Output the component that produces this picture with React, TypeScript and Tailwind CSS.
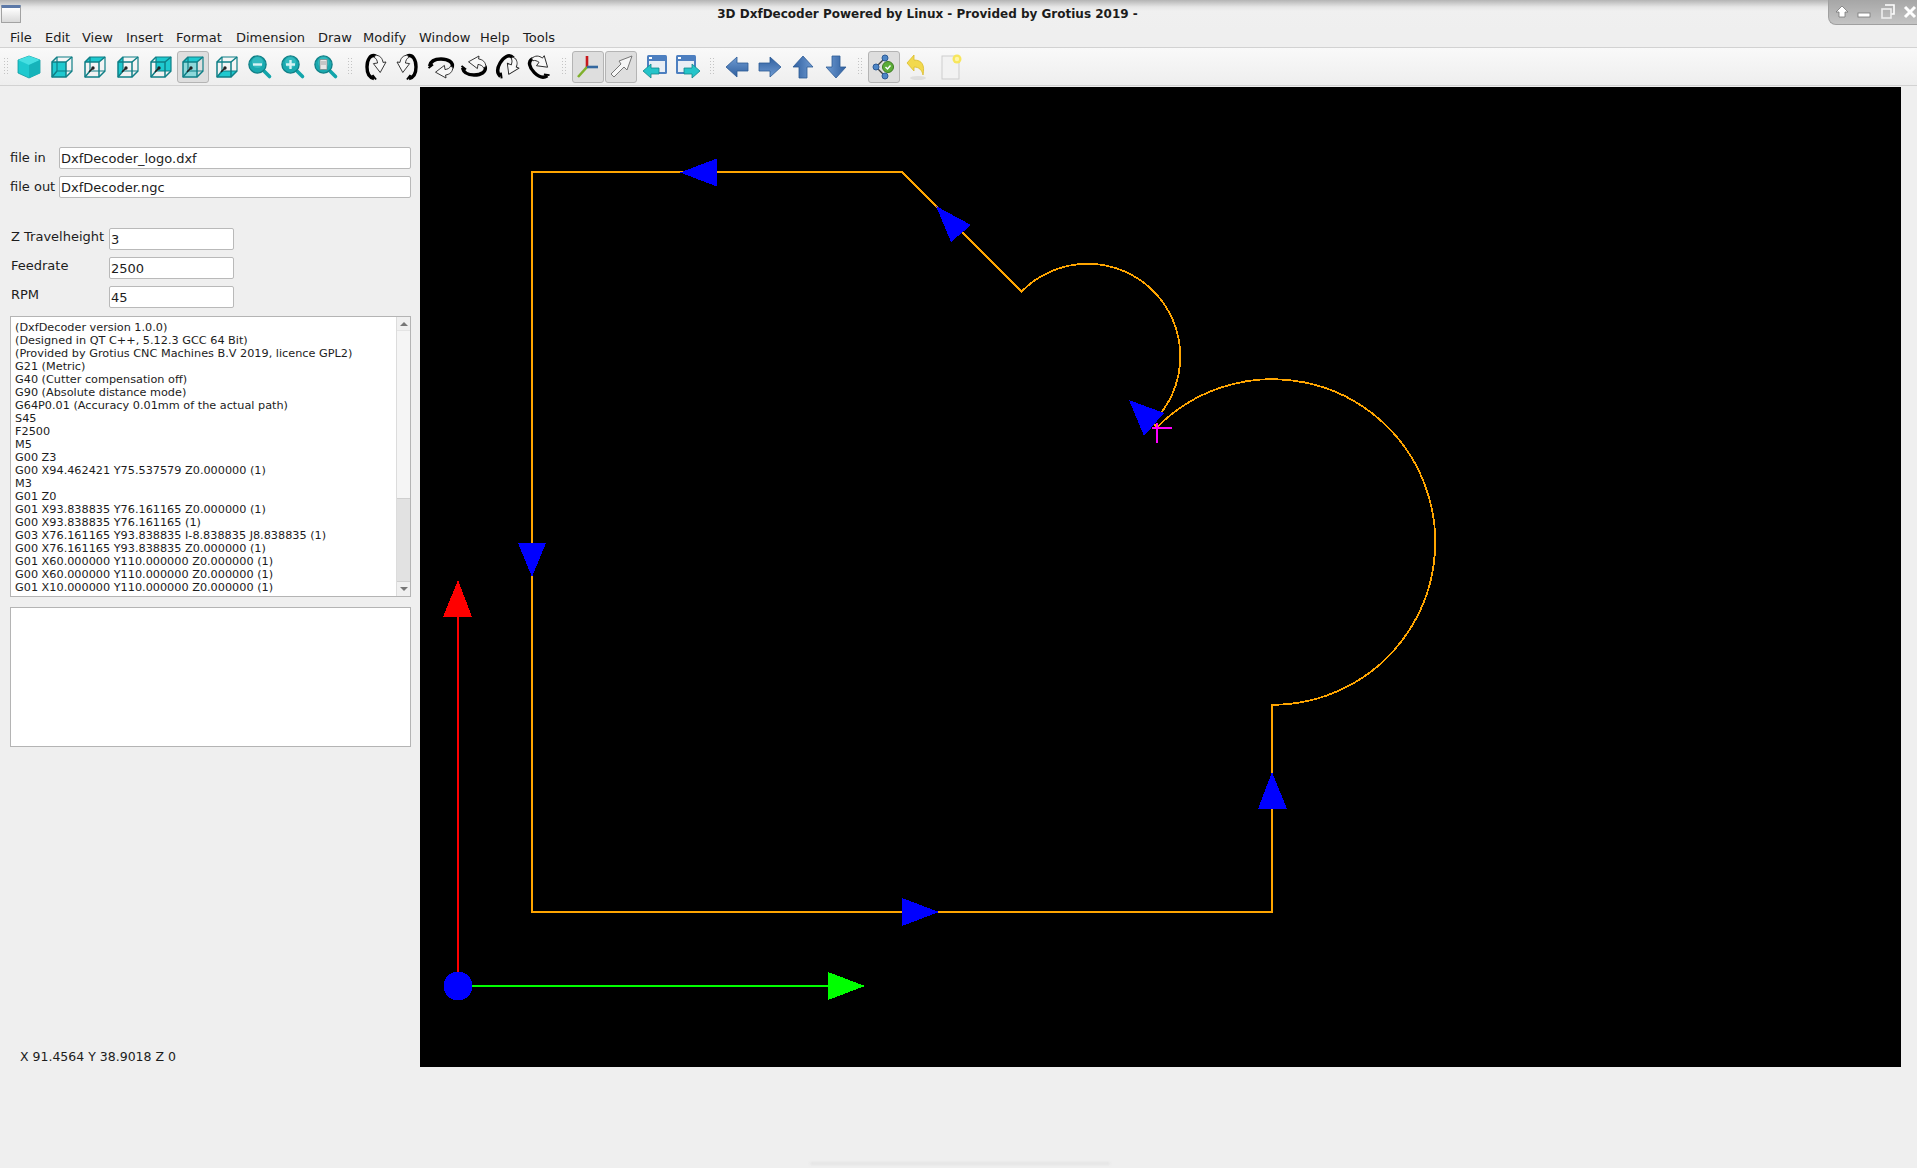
import React from 'react';

// Toolbar drawings
const TEAL = '#1fc9cf';
const TEAL_DARK = '#0f7f86';

type Face = 'solid' | 'front' | 'top' | 'back' | 'left' | 'iso' | 'bottom';

function Axes({ x = 11, y = 14 }: { x?: number; y?: number }) {
  return (
    <g stroke="#222" strokeWidth="1.6" strokeLinecap="round">
      <path d={`M${x} ${y}l-3.5 3.5`} />
      <circle cx={x} cy={y} r="0.9" fill="#222" />
    </g>
  );
}

function Cube({ face }: { face: Face }) {
  if (face === 'solid') {
    return (
      <svg width="26" height="26" viewBox="0 0 26 26">
        <path d="M13 2l11 4v13l-11 5-11-5V6z" fill={TEAL} stroke="#0e9aa0" strokeWidth="0.8" />
        <path d="M2 6l11 5 11-5-11-4z" fill="#46dfe2" />
        <path d="M13 11v13l11-5V6z" fill="#16b3ba" />
      </svg>
    );
  }
  const fills: Record<string, string> = {
    front: 'M3 8h14v15H3z',
    top: 'M3 8l5-5h15l-6 5z',
    back: 'M8 3h15v14H8z',
    left: 'M3 8l5-5v14l-5 6z',
    iso: 'M3 8h14l6-5H8z',
    bottom: 'M3 23l5-6h15l-6 6z',
  };
  return (
    <svg width="26" height="26" viewBox="0 0 26 26">
      <path d={fills[face]} fill={TEAL} />
      {face === 'iso' && <path d="M3 8h14v15H3z" fill="#2bd0d5" fillOpacity="0.45" />}
      <g fill="none" stroke={TEAL_DARK} strokeWidth="1.5" strokeLinejoin="round">
        <path d="M3 8h14v15H3z" />
        <path d="M8 3h15v14H8z" strokeWidth="1.2" />
        <path d="M3 8l5-5M17 8l6-5M17 23l6-6M3 23l5-6" />
      </g>
      {face !== 'front' && <Axes />}
    </svg>
  );
}

function Lens({ children }: { children?: React.ReactNode }) {
  return (
    <svg width="26" height="26" viewBox="0 0 26 26">
      <path d="M15.5 15.5l7 7" stroke="#12a5ab" strokeWidth="3.6" strokeLinecap="round" />
      <circle cx="10.5" cy="10.5" r="8.6" fill="#1aa9af" stroke="#0f7f86" strokeWidth="1.3" />
      <circle cx="10.5" cy="8.5" r="5.5" fill="#45c6ca" opacity="0.6" />
      {children}
    </svg>
  );
}

// Thick black arc with a thin outlined arrow curling round the other side
function Turn({ rotate = 0, flip = false }: { rotate?: number; flip?: boolean }) {
  return (
    <svg width="30" height="30" viewBox="0 0 30 30" className="shrink-0">
      <g transform={`rotate(${rotate} 15 15) ${flip ? 'translate(30 0) scale(-1 1)' : ''}`}>
        <path d="M16 4C10 2 7 8 7 15c0 6 2.5 10.5 7 11.5" fill="none" stroke="#000" strokeWidth="3.4" />
        <path d="M16 27.5l-3.5-4.5" fill="none" stroke="#000" strokeWidth="2" />
        <path
          d="M15 3.2C20 3 22.6 6.6 23 10.4L26 10 20.2 20.5 13.4 11.6 17.6 11C17.2 8.6 16.4 6.4 14.4 5.6Z"
          fill="#f8f8f8"
          stroke="#222"
          strokeWidth="0.9"
          strokeLinejoin="round"
        />
      </g>
    </svg>
  );
}

function Arrow({ rotate }: { rotate: number }) {
  return (
    <svg width="26" height="26" viewBox="0 0 26 26">
      <defs>
        <linearGradient id="blueArrow" x1="0" y1="0" x2="0" y2="1">
          <stop offset="0" stopColor="#6f9bd2" />
          <stop offset="1" stopColor="#2f5f9f" />
        </linearGradient>
      </defs>
      <path d="M2 13L13 3v6h11v8H13v6z" fill="url(#blueArrow)" stroke="#2c5a96" strokeWidth="0.8" strokeLinejoin="round" transform={`rotate(${rotate} 13 13)`} />
    </svg>
  );
}

function WinArrow({ right = false }: { right?: boolean }) {
  return (
    <svg width="28" height="28" viewBox="0 0 28 28">
      <rect x={right ? 2 : 6} y="2" width="20" height="19" rx="1.5" fill="#4d7fc0" />
      <rect x={right ? 4 : 8} y="8" width="16" height="11" fill="#e9eef5" />
      <rect x={right ? 4 : 8} y="4" width="3" height="2" fill="#fff" />
      <path
        d={right ? 'M10 15h8v-4l8 7-8 7v-4h-8z' : 'M18 15h-8v-4l-8 7 8 7v-4h8z'}
        fill="#25c4c9"
        stroke="#12868c"
        strokeWidth="0.8"
        strokeLinejoin="round"
      />
    </svg>
  );
}

function ToolIcon({ children, checked }: { children: React.ReactNode; checked?: boolean }) {
  return (
    <div
      className={
        checked
          ? 'flex h-[32px] w-[32px] mr-px shrink-0 items-center justify-center rounded-[3px] border border-[#b4b4b4] bg-[#dedede]'
          : 'flex h-[32px] w-[33px] shrink-0 items-center justify-center'
      }
    >
      {children}
    </div>
  );
}

function Handle({ wide }: { wide?: boolean }) {
  return (
    <div className={wide ? 'flex w-[16px] shrink-0 justify-center' : 'flex w-[12px] shrink-0 justify-center'}>
      <svg width="5" height="18" viewBox="0 0 5 18">
        {[0, 3, 6, 9, 12, 15].map((y) => (
          <g key={y} fill="#c4c4c4">
            <rect x="0" y={y} width="1" height="1" />
            <rect x="3" y={y} width="1" height="1" />
          </g>
        ))}
      </svg>
    </div>
  );
}

function Toolbar() {
  return (
    <div className="flex h-[39px] items-center border-y border-[#d2d2d2] bg-gradient-to-b from-[#f9f9f9] to-[#eeeeee]">
      <Handle />
      <ToolIcon><Cube face="solid" /></ToolIcon>
      <ToolIcon><Cube face="front" /></ToolIcon>
      <ToolIcon><Cube face="top" /></ToolIcon>
      <ToolIcon><Cube face="left" /></ToolIcon>
      <ToolIcon><Cube face="back" /></ToolIcon>
      <ToolIcon checked><Cube face="iso" /></ToolIcon>
      <ToolIcon><Cube face="bottom" /></ToolIcon>
      <ToolIcon>
        <Lens><path d="M6 10.5h9" stroke="#d7f3f4" strokeWidth="2.4" /></Lens>
      </ToolIcon>
      <ToolIcon>
        <Lens><path d="M6 10.5h9M10.5 6v9" stroke="#d7f3f4" strokeWidth="2.4" /></Lens>
      </ToolIcon>
      <ToolIcon>
        <Lens>
          <rect x="7" y="5.5" width="7" height="10" fill="#e6e6e6" stroke="#777" strokeWidth="0.6" />
          <path d="M8 8h5M8 10h5" stroke="#888" strokeWidth="0.7" />
        </Lens>
      </ToolIcon>
      <Handle wide />
      <ToolIcon><Turn /></ToolIcon>
      <ToolIcon><Turn flip /></ToolIcon>
      <ToolIcon><Turn rotate={90} /></ToolIcon>
      <ToolIcon><Turn rotate={90} flip /></ToolIcon>
      <ToolIcon><Turn rotate={30} /></ToolIcon>
      <ToolIcon><Turn rotate={-45} /></ToolIcon>
      <Handle wide />
      <ToolIcon checked>
        <svg width="26" height="26" viewBox="0 0 26 26">
          <path d="M12 13V2" stroke="#c7181c" strokeWidth="2.6" />
          <path d="M12 13L3 23" stroke="#7fb02c" strokeWidth="2.6" />
          <path d="M12 13h11" stroke="#34689f" strokeWidth="2.6" />
        </svg>
      </ToolIcon>
      <ToolIcon checked>
        <svg width="26" height="26" viewBox="0 0 26 26">
          <path d="M24 2L11 7l2 3L3 20l3 3 10-10 3 3z" fill="#f7f7f7" stroke="#777" strokeWidth="1" strokeLinejoin="round" />
        </svg>
      </ToolIcon>
      <ToolIcon><WinArrow /></ToolIcon>
      <ToolIcon><WinArrow right /></ToolIcon>
      <Handle wide />
      <ToolIcon><Arrow rotate={0} /></ToolIcon>
      <ToolIcon><Arrow rotate={180} /></ToolIcon>
      <ToolIcon><Arrow rotate={90} /></ToolIcon>
      <ToolIcon><Arrow rotate={270} /></ToolIcon>
      <Handle wide />
      <ToolIcon checked>
        <svg width="26" height="28" viewBox="0 0 26 28">
          <path d="M14 5L5 14l9 9" fill="none" stroke="#444" strokeWidth="1.4" />
          <circle cx="14" cy="5" r="3" fill="#4d86c6" stroke="#2c5a96" />
          <circle cx="5" cy="14" r="3" fill="#4d86c6" stroke="#2c5a96" />
          <circle cx="14" cy="23" r="3" fill="#4d86c6" stroke="#2c5a96" />
          <circle cx="17" cy="14" r="5.5" fill="#5cad38" stroke="#3c7d22" />
          <path d="M14.5 14l2 2 3-3.5" fill="none" stroke="#fff" strokeWidth="1.4" />
        </svg>
      </ToolIcon>
      <ToolIcon>
        <svg width="26" height="28" viewBox="0 0 26 28">
          <ellipse cx="13" cy="25" rx="8" ry="2" fill="#dedede" />
          <path d="M2 10l7-8v5c8 0 11 5 9 15-1-5-4-8-9-8v4z" fill="#f2d94e" stroke="#d9bb2c" strokeWidth="0.8" strokeLinejoin="round" />
        </svg>
      </ToolIcon>
      <ToolIcon>
        <svg width="26" height="28" viewBox="0 0 26 28">
          <rect x="4" y="3" width="17" height="23" fill="#f2f2f2" stroke="#cdcdcd" />
          <circle cx="19" cy="6" r="4.5" fill="#f7e65c" />
          <circle cx="19" cy="6" r="2.2" fill="#fff6a8" />
        </svg>
      </ToolIcon>
    </div>
  );
}

function WindowButtons() {
  return (
    <div className="flex h-[25px] w-[89px] shrink-0 items-center justify-between rounded-bl-lg border-l border-b border-[#a0a0a0] bg-gradient-to-b from-[#a6a6a6] to-[#c4c4c4] pl-[5px] pr-0">
      <svg width="16" height="16" viewBox="0 0 16 16">
        <path d="M8 2l6 6h-3v5H5V8H2z" fill="#fff" stroke="#777" strokeWidth="0.8" />
      </svg>
      <svg width="16" height="16" viewBox="0 0 16 16">
        <rect x="1" y="9" width="12" height="4" fill="#fff" stroke="#777" strokeWidth="0.8" />
      </svg>
      <svg width="16" height="16" viewBox="0 0 16 16">
        <path d="M5 1h9v9h-3" fill="none" stroke="#fff" strokeWidth="1.6" />
        <rect x="2" y="5" width="9" height="9" fill="none" stroke="#eee" strokeWidth="1.6" />
      </svg>
      <svg width="14" height="16" viewBox="0 0 14 16">
        <path d="M2 3l10 10M12 3L2 13" stroke="#fff" strokeWidth="3" />
      </svg>
    </div>
  );
}

function TitleBar() {
  return (
    <div className="flex h-[29px] items-start bg-[linear-gradient(#b4b4b4_0,#e6e6e6_7px,#f0f0f0_11px,#efefef_100%)]">
      <div className="ml-[1px] mt-[5px] h-[18px] w-[20px] shrink-0 rounded-[1px] border border-[#a2a2a2] bg-gradient-to-b from-[#ffffff] to-[#d9d9d9] border-t-[3px] border-t-[#5c79a8]" />
      <div className="flex-1 pl-[6px] pt-[5px] text-center text-[12px] leading-[18px] font-bold text-[#1c1c1c]">
        3D DxfDecoder Powered by Linux - Provided by Grotius 2019 -
      </div>
      <WindowButtons />
    </div>
  );
}

function MenuBar() {
  return (
    <div className="flex h-[18px] items-start pl-[10px] text-[13px] leading-[17px] text-[#1c1c1c]">
      <span className="w-[35px]">File</span>
      <span className="w-[37px]">Edit</span>
      <span className="w-[44px]">View</span>
      <span className="w-[50px]">Insert</span>
      <span className="w-[60px]">Format</span>
      <span className="w-[82px]">Dimension</span>
      <span className="w-[45px]">Draw</span>
      <span className="w-[56px]">Modify</span>
      <span className="w-[61px]">Window</span>
      <span className="w-[43px]">Help</span>
      <span className="w-[40px]">Tools</span>
    </div>
  );
}

function Field({ value, wide }: { value: string; wide?: boolean }) {
  return (
    <div
      className={
        (wide ? 'w-[352px] ' : 'w-[125px] ') +
        'h-[22px] rounded-[2px] border border-[#b9b9b9] bg-white px-[1px] text-[13px] leading-[21px] text-[#1c1c1c]'
      }
    >
      {value}
    </div>
  );
}

const NGC_LINES = [
  '(DxfDecoder version 1.0.0)',
  '(Designed in QT C++, 5.12.3 GCC 64 Bit)',
  '(Provided by Grotius CNC Machines B.V 2019, licence GPL2)',
  'G21 (Metric)',
  'G40 (Cutter compensation off)',
  'G90 (Absolute distance mode)',
  'G64P0.01 (Accuracy 0.01mm of the actual path)',
  'S45',
  'F2500',
  'M5',
  'G00 Z3',
  'G00 X94.462421 Y75.537579 Z0.000000 (1)',
  'M3',
  'G01 Z0',
  'G01 X93.838835 Y76.161165 Z0.000000 (1)',
  'G00 X93.838835 Y76.161165 (1)',
  'G03 X76.161165 Y93.838835 I-8.838835 J8.838835 (1)',
  'G00 X76.161165 Y93.838835 Z0.000000 (1)',
  'G01 X60.000000 Y110.000000 Z0.000000 (1)',
  'G00 X60.000000 Y110.000000 Z0.000000 (1)',
  'G01 X10.000000 Y110.000000 Z0.000000 (1)',
  'G00 X10.000000 Y110.000000 Z0.000000 (1)',
];

function CodeBox() {
  return (
    <div className="mt-[8px] flex h-[281px] w-[401px] overflow-hidden border border-[#b4b4b4] bg-white">
      <div className="flex-1 overflow-hidden pl-[4px] pt-[4px] text-[11.25px] leading-[13px] whitespace-nowrap text-[#1c1c1c]">
        {NGC_LINES.map((line, i) => (
          <div key={i}>{line}</div>
        ))}
      </div>
      <div className="flex w-[14px] shrink-0 flex-col border-l border-[#dcdcdc] bg-[#f5f5f5]">
        <div className="flex h-[14px] shrink-0 items-center justify-center border-b border-[#e4e4e4] bg-[#f0f0f0]">
          <div className="h-0 w-0 border-x-[4px] border-b-[4px] border-x-transparent border-b-[#777]" />
        </div>
        <div className="h-[167px] shrink-0" />
        <div className="flex-1 border-y border-[#cfcfcf] bg-[#e2e2e2]" />
        <div className="flex h-[14px] shrink-0 items-center justify-center bg-[#f0f0f0]">
          <div className="h-0 w-0 border-x-[4px] border-t-[4px] border-x-transparent border-t-[#777]" />
        </div>
      </div>
    </div>
  );
}

function SidePanel() {
  return (
    <div className="relative flex w-[420px] shrink-0 flex-col pl-[10px] pt-[61px] text-[13px] text-[#1c1c1c]">
      <div className="flex h-[22px] items-center">
        <span className="w-[49px]">file in</span>
        <Field value="DxfDecoder_logo.dxf" wide />
      </div>
      <div className="mt-[7px] flex h-[22px] items-center">
        <span className="w-[49px]">file out</span>
        <Field value="DxfDecoder.ngc" wide />
      </div>
      <div className="mt-[30px] flex h-[22px] items-start pl-[1px]">
        <span className="w-[98px] leading-[17px]">Z Travelheight</span>
        <Field value="3" />
      </div>
      <div className="mt-[7px] flex h-[22px] items-start pl-[1px]">
        <span className="w-[98px] leading-[17px]">Feedrate</span>
        <Field value="2500" />
      </div>
      <div className="mt-[7px] flex h-[22px] items-start pl-[1px]">
        <span className="w-[98px] leading-[17px]">RPM</span>
        <Field value="45" />
      </div>
      <CodeBox />
      <div className="mt-[10px] h-[140px] w-[401px] border border-[#b4b4b4] bg-white" />
      <div className="mt-[301px] pl-[10px] text-[12.5px] leading-[18px]">X 91.4564 Y 38.9018 Z 0</div>
    </div>
  );
}

// Page coordinates are used directly in the viewBox
function Viewport() {
  const blue = [
    '680,172.5 717,158.5 717,186.5',
    '936,206 971,225 951,242',
    '532,577 518,543 546,543',
    '939,912 902,898 902,926',
    '1272,772 1258,809 1287,809',
    '1129,400 1164,413 1144,436',
  ];
  return (
    <div className="mr-[16px] mt-[1px] h-[980px] flex-1 bg-black">
      <svg width="1481" height="980" viewBox="420 87 1481 980" className="block" shapeRendering="crispEdges">
        <path
          d="M532 912V172H902L1021.5 291.6A92.6 92.6 0 1 1 1152.6 422.4L1157.2 427A162.8 162.8 0 1 1 1272 704.8V912Z"
          fill="none"
          stroke="#ffa500"
          strokeWidth="1.8"
        />
        <path d="M458 986V617" stroke="#ff0000" strokeWidth="2" />
        <path d="M458 986H828" stroke="#00ff00" strokeWidth="2" />
        <polygon points="458,580 443,617 472,617" fill="#ff0000" />
        <polygon points="865,986 828,972 828,1000" fill="#00ff00" />
        <circle cx="458" cy="986" r="14.5" fill="#0000ff" />
        {blue.map((points) => (
          <polygon key={points} points={points} fill="#0000ff" />
        ))}
        <path d="M1152 428H1172M1157 423V443" stroke="#ff00ff" strokeWidth="2" />
      </svg>
    </div>
  );
}

export default function App() {
  return (
    <div className="relative flex h-[1168px] w-[1917px] flex-col overflow-hidden bg-[#efefef] font-['DejaVu_Sans',sans-serif]">
      <TitleBar />
      <MenuBar />
      <Toolbar />
      <div className="flex flex-1">
        <SidePanel />
        <Viewport />
      </div>
      <div className="absolute bottom-[3px] left-[810px] h-[3px] w-[300px] rounded-full bg-[#e4e4e4] blur-[1px]" />
    </div>
  );
}
